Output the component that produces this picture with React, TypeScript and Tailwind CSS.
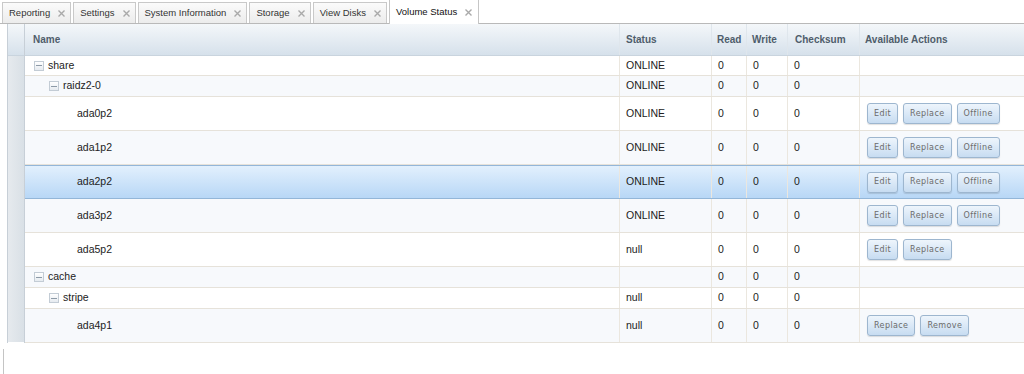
import React from 'react';

type Row = {
  name: string;
  level: 0 | 1 | 2;
  status: string;
  actions: string[];
  tall: boolean;
  alt: boolean;
  selected?: boolean;
};

const tabs = ['Reporting', 'Settings', 'System Information', 'Storage', 'View Disks', 'Volume Status'];

const rows: Row[] = [
  { name: 'share', level: 0, status: 'ONLINE', actions: [], tall: false, alt: false },
  { name: 'raidz2-0', level: 1, status: 'ONLINE', actions: [], tall: false, alt: true },
  { name: 'ada0p2', level: 2, status: 'ONLINE', actions: ['Edit', 'Replace', 'Offline'], tall: true, alt: false },
  { name: 'ada1p2', level: 2, status: 'ONLINE', actions: ['Edit', 'Replace', 'Offline'], tall: true, alt: true },
  { name: 'ada2p2', level: 2, status: 'ONLINE', actions: ['Edit', 'Replace', 'Offline'], tall: true, alt: false, selected: true },
  { name: 'ada3p2', level: 2, status: 'ONLINE', actions: ['Edit', 'Replace', 'Offline'], tall: true, alt: true },
  { name: 'ada5p2', level: 2, status: 'null', actions: ['Edit', 'Replace'], tall: true, alt: false },
  { name: 'cache', level: 0, status: '', actions: [], tall: false, alt: true },
  { name: 'stripe', level: 1, status: 'null', actions: [], tall: false, alt: false },
  { name: 'ada4p1', level: 2, status: 'null', actions: ['Replace', 'Remove'], tall: true, alt: true },
];

function CloseX() {
  return (
    <svg width="7" height="7" viewBox="0 0 7 7" className="ml-[8px] shrink-0">
      <path d="M0.5 0.5 L6.5 6.5 M6.5 0.5 L0.5 6.5" stroke="#a9a9a9" strokeWidth="1.4" />
    </svg>
  );
}

function MinusBox() {
  return (
    <span className="mr-[4px] flex h-[10px] w-[10px] shrink-0 items-center justify-center border border-[#c3ccd5] bg-gradient-to-b from-white to-[#e6ebf0]">
      <span className="h-px w-[6px] bg-[#8d9aa7]" />
    </span>
  );
}

function ActionButton({ label }: { label: string }) {
  return (
    <button
      className="h-[21px] rounded-[3px] border border-[#9db6cf] bg-gradient-to-b from-[#eef5fc] to-[#c7dcf1] px-[6px] text-[8px] tracking-[0.4px] text-[#6b6b6b] shadow-[0_1px_1px_rgba(0,0,0,0.12)]"
      style={{ fontFamily: '"DejaVu Sans", sans-serif' }}
    >
      {label}
    </button>
  );
}

const cols = 'grid grid-cols-[595px_92px_35px_41px_72px_1fr]';
const cell = 'flex items-center border-r border-[#ebe7df] pl-[6px]';

export default function App() {
  return (
    <div className="h-[374px] w-[1024px] overflow-hidden bg-white text-[#222]" style={{ fontFamily: '"Liberation Sans", Arial, sans-serif' }}>
      {/* tab strip */}
      <div className="flex h-[24px] items-end gap-[2px] border-b border-[#b9b9b9] pl-[2px]">
        {tabs.map((t) => {
          const active = t === 'Volume Status';
          return (
            <div
              key={t}
              className={
                active
                  ? '-mb-px flex h-[25px] items-center border border-b-0 border-[#c6c6c6] border-t-[#c9dcef] bg-white pl-[6px] pr-[6px] text-[9.5px] text-[#111]'
                  : 'flex h-[21px] items-center border border-b-0 border-[#c9c9c9] bg-gradient-to-b from-[#fbfbfb] to-[#ececec] pl-[6px] pr-[5px] text-[9.5px] text-[#333]'
              }
            >
              <span>{t}</span>
              <CloseX />
            </div>
          );
        })}
      </div>

      {/* grid */}
      <div className="ml-[7px] flex">
        <div className="w-[18px] shrink-0 border-x border-[#c7cfd7]">
          <div className="h-[32px] border-b border-[#c9d4de] bg-gradient-to-b from-[#f4f7fa] to-[#d6e1eb]" />
          <div className="h-[286px] bg-gradient-to-r from-[#e6eaee] to-[#d9e0e6]" />
        </div>

        <div className="flex-1">
          <div className={`${cols} h-[32px] border-b border-[#c9d4de] bg-gradient-to-b from-[#f4f7fa] to-[#d6e1eb] text-[10px] font-bold text-[#4f5d6b]`}>
            <div className="flex items-center border-r border-[#dfe6ec] pl-[8px]">Name</div>
            <div className="flex items-center border-r border-[#dfe6ec] pl-[6px]">Status</div>
            <div className="flex items-center border-r border-[#dfe6ec] pl-[5px]">Read</div>
            <div className="flex items-center border-r border-[#dfe6ec] pl-[5px]">Write</div>
            <div className="flex items-center border-r border-[#dfe6ec] pl-[7px]">Checksum</div>
            <div className="flex items-center pl-[5px]">Available Actions</div>
          </div>

          {rows.map((r) => {
            const bg = r.selected
              ? 'bg-gradient-to-b from-[#e2f0fd] to-[#b8d7f6] border-y border-[#93b6d8]'
              : r.alt
                ? 'bg-[#f7f9fc] border-b border-[#e6e2da]'
                : 'bg-white border-b border-[#e6e2da]';
            const h = r.tall ? 'h-[34px]' : r.name === 'share' ? 'h-[20px]' : 'h-[21px]';
            return (
              <div key={r.name} className={`${cols} ${h} ${bg} text-[10.5px]`}>
                <div
                  className={`flex items-center border-r border-[#ebe7df] ${
                    r.level === 0 ? 'pl-[9px]' : r.level === 1 ? 'pl-[24px]' : 'pl-[52px]'
                  }`}
                >
                  {r.level < 2 && <MinusBox />}
                  <span>{r.name}</span>
                </div>
                <div className={cell}>{r.status}</div>
                <div className={cell}>0</div>
                <div className={cell}>0</div>
                <div className={cell}>0</div>
                <div className="flex items-center gap-[5px] pl-[7px]">
                  {r.actions.map((a) => (
                    <ActionButton key={a} label={a} />
                  ))}
                </div>
              </div>
            );
          })}
        </div>
      </div>

      <div className="ml-[3px] mt-[6px] h-[30px] border-l border-[#c4c4c4]" />
    </div>
  );
}
